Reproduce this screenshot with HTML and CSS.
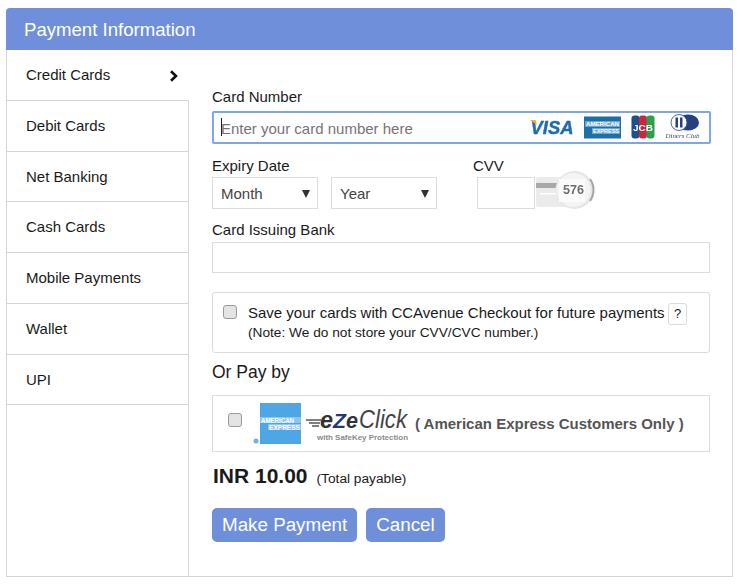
FILE: index.html
```html
<!DOCTYPE html>
<html lang="en">
<head>
<meta charset="utf-8">
<title>Payment Information</title>
<link rel="stylesheet" href="styles.css">
</head>
<body>
<section class="panel">
  <h1 class="panel-title">Payment Information</h1>
  <div class="panel-body">
    <ul class="methods">
      <li class="method active">Credit Cards
        <svg class="chev" width="10" height="12" viewBox="0 0 10 12"><path d="M2 1.200 7 6 2 10.800" fill="none" stroke="#111" stroke-width="2.600"/></svg>
      </li>
      <li class="method">Debit Cards</li>
      <li class="method">Net Banking</li>
      <li class="method">Cash Cards</li>
      <li class="method">Mobile Payments</li>
      <li class="method">Wallet</li>
      <li class="method">UPI</li>
    </ul>
    <form class="form">
      <label class="lbl lbl-card">Card Number</label>
      <div class="card-input">
        <span class="caret"></span>
        <input class="card-field" type="text" placeholder="Enter your card number here">
        <div class="card-logos">
          <svg class="logo" width="44" height="18" viewBox="0 0 44 18"><text x="0.500" y="15.500" font-family="Liberation Sans" font-weight="700" font-style="italic" font-size="18.500" fill="#1c6db0" stroke="#1c6db0" stroke-width="0.400" textLength="43" lengthAdjust="spacingAndGlyphs">VISA</text><path d="M0 2h5.500l1.500 5z" fill="#f0ac25"/></svg>
          <svg class="logo" width="37" height="23" viewBox="0 0 37 23"><rect width="37" height="22" y="0.500" fill="#1d6fa8"/><rect x="1" y="5" width="35" height="6" fill="#6da6cd"/><rect x="8" y="12" width="28" height="6" fill="#6da6cd"/><text x="2" y="10" font-family="Liberation Sans" font-size="5.500" font-weight="700" fill="#fff" textLength="33" lengthAdjust="spacingAndGlyphs">AMERICAN</text><text x="9" y="17" font-family="Liberation Sans" font-size="5.500" font-weight="700" fill="#fff" textLength="26" lengthAdjust="spacingAndGlyphs">EXPRESS</text></svg>
          <svg class="logo" width="24" height="24" viewBox="0 0 24 24"><rect x="0.500" y="0.500" width="8" height="23" rx="3" fill="#1d4f91"/><rect x="8" y="0.500" width="8" height="23" rx="3" fill="#c8283c"/><rect x="15.500" y="0.500" width="8" height="23" rx="3" fill="#2f9e4b"/><text x="2" y="16" font-family="Liberation Sans" font-size="9.500" font-weight="700" fill="#fff" textLength="20" lengthAdjust="spacingAndGlyphs">JCB</text></svg>
          <svg class="logo" width="36" height="26" viewBox="0 0 36 26"><ellipse cx="23" cy="8.500" rx="11" ry="8" fill="#26417f"/><circle cx="14" cy="8.500" r="8" fill="#fff" stroke="#26417f" stroke-width="0.800"/><rect x="10.500" y="3.500" width="2.500" height="10" fill="#26417f"/><rect x="15" y="3.500" width="2.500" height="10" fill="#26417f"/><text x="0.500" y="24" font-family="Liberation Serif" font-style="italic" font-size="7" fill="#444" textLength="34" lengthAdjust="spacingAndGlyphs">Diners Club</text></svg>
        </div>
      </div>
      <div class="exp-row">
        <div class="exp-col">
          <label class="lbl">Expiry Date</label>
          <div class="selects">
            <div class="sel"><select class="sel-field"><option>Month</option></select></div>
            <div class="sel"><select class="sel-field"><option>Year</option></select></div>
          </div>
        </div>
        <div class="cvv-col">
          <label class="lbl">CVV</label>
          <div class="cvv-row">
            <input class="cvv-field" type="text">
            <svg class="cvv-img" width="60" height="42" viewBox="0 0 60 42"><rect x="1" y="8" width="46" height="30" rx="2" fill="#ebebeb"/><rect x="1" y="14" width="46" height="5" fill="#a8a8a8"/><rect x="5" y="24" width="16" height="1.500" fill="#fff"/><circle cx="39.500" cy="21" r="19" fill="#e6e6e6"/><circle cx="38.500" cy="21" r="17" fill="#f4f4f4"/><path d="M55 10a19 19 0 0 1 0 22" fill="none" stroke="#a5a5a5" stroke-width="2"/><rect x="24" y="10" width="26" height="23" fill="#fbfbfb"/><text x="28" y="24.500" font-family="Liberation Sans" font-weight="700" font-size="12.500" fill="#707070" textLength="21" lengthAdjust="spacingAndGlyphs">576</text></svg>
          </div>
        </div>
      </div>
      <label class="lbl lbl-bank">Card Issuing Bank</label>
      <input class="bank-field" type="text">
      <div class="save-box">
        <input class="check" type="checkbox">
        <div class="save-text">
          <div class="save-line">Save your cards with CCAvenue Checkout for future payments</div>
          <div class="save-note">(Note: We do not store your CVV/CVC number.)</div>
        </div>
        <span class="help">?</span>
      </div>
      <div class="or-pay">Or Pay by</div>
      <div class="eze-box">
        <input class="check eze-check" type="checkbox">
        <svg class="eze-logo" width="162" height="44" viewBox="0 0 162 44"><circle cx="3" cy="39" r="2.500" fill="#6fb2e0"/><rect x="7" y="1" width="41" height="41" fill="#4fa6e4"/><rect x="7" y="15" width="41" height="6" fill="#8cc6ee"/><rect x="15" y="22" width="33" height="6" fill="#8cc6ee"/><text x="8" y="20.500" font-family="Liberation Sans" font-weight="700" font-size="6.500" fill="#fff" textLength="33" lengthAdjust="spacingAndGlyphs">AMERICAN</text><text x="16" y="27.500" font-family="Liberation Sans" font-weight="700" font-size="6.500" fill="#fff" textLength="31" lengthAdjust="spacingAndGlyphs">EXPRESS</text><path d="M53 18h15M56 21h11M59 24h7" stroke="#555" stroke-width="1.300"/><text x="67" y="26" font-family="Liberation Sans" font-style="italic" font-weight="700" font-size="23" fill="#333" textLength="13" lengthAdjust="spacingAndGlyphs">e</text><text x="80" y="26" font-family="Liberation Sans" font-style="italic" font-weight="700" font-size="21" fill="#243a78" textLength="13" lengthAdjust="spacingAndGlyphs">Z</text><text x="93" y="26" font-family="Liberation Sans" font-style="italic" font-weight="700" font-size="22" fill="#333" textLength="12" lengthAdjust="spacingAndGlyphs">e</text><text x="106" y="26" font-family="Liberation Sans" font-style="italic" font-size="26" fill="#444" textLength="48" lengthAdjust="spacingAndGlyphs">Click</text><text x="64" y="38" font-family="Liberation Sans" font-weight="700" font-size="8" fill="#8a8a8a" textLength="91" lengthAdjust="spacingAndGlyphs">with SafeKey Protection</text></svg>
        <span class="eze-text">( American Express Customers Only )</span>
      </div>
      <div class="total"><strong class="amount">INR 10.00</strong><span class="payable">(Total payable)</span></div>
      <div class="actions">
        <button class="btn" type="button">Make Payment</button>
        <button class="btn" type="button">Cancel</button>
      </div>
    </form>
  </div>
</section>
</body>
</html>
```

FILE: styles.css
```css
* { box-sizing: border-box; }
html, body { margin: 0; padding: 0; }
body {
  padding: 8px 10px 0 6px;
  background: #fff;
  font-family: "Liberation Sans", Arial, sans-serif;
  color: #1a1a1a;
  font-size: 15px;
}
.panel { width: 727px; height: 569px; display: flex; flex-direction: column; }
.panel-title {
  margin: 0;
  height: 42px;
  padding-left: 18px;
  background: #6f8fdb;
  border-radius: 4px 4px 0 0;
  color: #fff;
  font-size: 18.600px;
  font-weight: 400;
  line-height: 43px;
}
.panel-body {
  flex: 1;
  display: flex;
  border: 1px solid #d6d6d6;
  border-top: 0;
}
.methods {
  width: 182px;
  flex: none;
  margin: 0;
  padding: 0;
  list-style: none;
  position: relative;
  border-right: 1px solid #d6d6d6;
}
.method {
  height: 50.750px;
  padding: 16px 0 0 19px;
  border-bottom: 1px solid #d6d6d6;
  line-height: 17px;
  background: #fff;
  display: flex;
  justify-content: space-between;
}
.method.active { width: 182px; }
.chev { margin: 4px 10px 0 0; }
.form { flex: 1; padding: 38px 22px 0 23px; min-width: 0; display: flex; flex-direction: column; align-items: flex-start; }
.lbl { display: block; line-height: 17px; }
.lbl-card { margin-bottom: 6px; }
.card-input {
  position: relative;
  width: 499px;
  height: 33px;
  border: 2px solid #7ca6ee;
  border-radius: 2px;
}
.caret { position: absolute; left: 7px; top: 5px; width: 1px; height: 18px; background: #222; }
.card-field {
  width: 100%;
  height: 100%;
  border: 0;
  outline: 0;
  padding: 1px 0 0 7px;
  background: transparent;
  font: inherit;
}
.card-field::placeholder { color: #757575; opacity: 1; }
.card-logos {
  position: absolute;
  right: 8px;
  top: 1px;
  display: flex;
  align-items: center;
  gap: 10px;
  filter: blur(0.4px);
}
.logo { display: block; }
.exp-row { display: flex; margin-top: 13px; }
.exp-col { width: 261px; }
.selects { display: flex; gap: 13px; margin-top: 3px; }
.sel { position: relative; width: 106px; height: 32px; }
.sel::after {
  content: "";
  position: absolute;
  right: 8px;
  top: 13px;
  border-left: 4px solid transparent;
  border-right: 4px solid transparent;
  border-top: 8px solid #333;
}
.sel-field {
  appearance: none;
  width: 100%;
  height: 100%;
  border: 1px solid #dcdcdc;
  background: #fff;
  padding: 0 8px;
  font: inherit;
  color: #444;
  border-radius: 0;
}
.cvv-row { position: relative; display: flex; margin: 3px 0 0 4px; height: 32px; }
.cvv-field { width: 58px; height: 32px; border: 1px solid #dcdcdc; background: #fff; }
.cvv-img { position: absolute; left: 58px; top: -8px; filter: blur(0.3px); }
.lbl-bank { margin-top: 12px; }
.bank-field { display: block; width: 498px; height: 31px; margin-top: 4px; border: 1px solid #dcdcdc; background: #fff; }
.save-box {
  width: 498px;
  height: 61px;
  margin-top: 19px;
  padding: 10px 22px 0 10px;
  display: flex;
  align-items: flex-start;
  border: 1px solid #dcdcdc;
  border-radius: 3px;
}
.check {
  appearance: none;
  flex: none;
  width: 14px;
  height: 14px;
  margin: 2px 0 0 0;
  border: 1px solid #9a9a9a;
  border-radius: 3px;
  background: #e4e4e4;
}
.save-text { margin-left: 11px; flex: 1; }
.save-line { line-height: 20px; }
.save-note { font-size: 13.700px; line-height: 20px; }
.help {
  width: 19px;
  height: 22px;
  border: 1px solid #dcdcdc;
  border-radius: 3px;
  text-align: center;
  line-height: 20px;
  font-size: 13px;
}
.or-pay { margin-top: 9px; font-size: 17.500px; line-height: 20px; }
.eze-box {
  width: 498px;
  height: 57px;
  margin-top: 13px;
  padding: 0 0 0 15px;
  display: flex;
  align-items: center;
  border: 1px solid #dcdcdc;
}
.eze-check { margin: 0 0 8px; }
.eze-logo { margin-left: 11px; flex: none; }
.eze-text { color: #555; font-weight: 700; font-size: 15px; white-space: nowrap; }
.total { margin-top: 12px; display: flex; align-items: baseline; line-height: 24px; }
.amount { font-size: 21px; margin-left: 1px; }
.payable { margin-left: 9px; font-size: 13.700px; }
.actions { display: flex; gap: 9px; margin-top: 17px; }
.btn {
  height: 34px;
  padding: 0 10px;
  border: 0;
  border-radius: 5px;
  background: #6f8fdb;
  color: #fff;
  font: inherit;
  font-size: 18.800px;
}
```
